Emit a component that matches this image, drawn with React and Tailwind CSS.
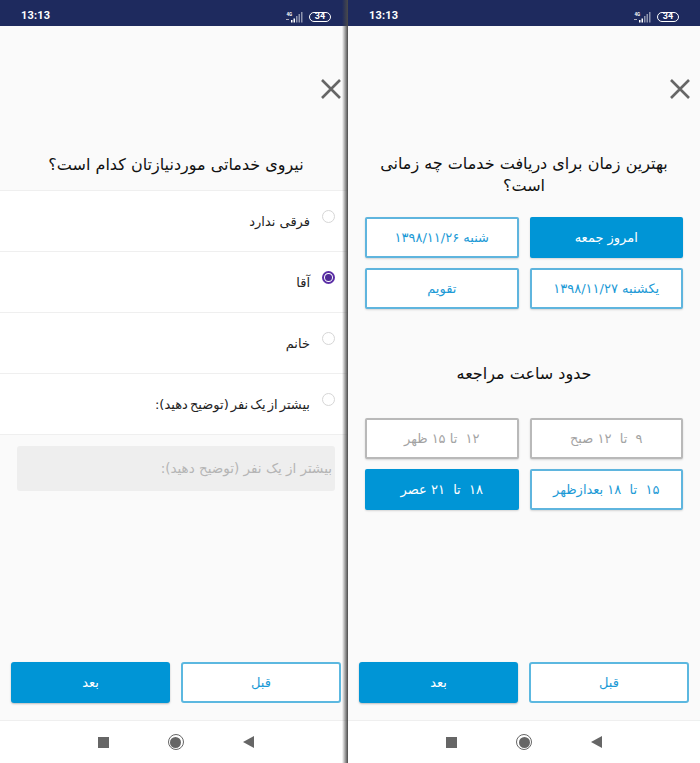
const font = { fontFamily: '"DejaVu Sans", "Noto Sans", sans-serif' };

function StatusBar({ pr }) {
  return (
    <div dir="ltr" className={`h-[26px] bg-[#1e2a5e] flex items-center justify-between pl-[21px] pt-[7px] shrink-0 ${pr}`}>
      <span className="text-white text-[11px] font-bold font-['Roboto'] tracking-[0.2px]">13:13</span>
      <div className="flex items-center gap-[6px]">
        <svg width="18" height="12" viewBox="0 0 18 12">
          <text x="1.5" y="4.5" fontSize="4.5" fontWeight="700" fill="#fff" fontFamily="Roboto">4G</text>
          <rect x="1" y="8" width="3" height="1" fill="#aab" />
          <rect x="6" y="9" width="1.5" height="2.5" fill="#fff" />
          <rect x="8.5" y="7.5" width="1.5" height="4" fill="#fff" />
          <rect x="11" y="5" width="1.5" height="6.5" fill="#8e94ae" />
          <rect x="13.5" y="3" width="1.5" height="8.5" fill="#8e94ae" />
          <rect x="16" y="1" width="1.5" height="10.5" fill="#8e94ae" />
        </svg>
        <div className="w-[22px] h-[10px] rounded-full border border-white flex items-center justify-center text-white text-[9px] font-bold font-['Roboto'] leading-none">34</div>
      </div>
    </div>
  );
}

function CloseIcon() {
  return (
    <svg width="20" height="20" viewBox="0 0 20 20" fill="none" stroke="#666" strokeWidth="2.6">
      <path d="M1 1 L19 19 M19 1 L1 19" />
    </svg>
  );
}

function NavBar({ pl }) {
  return (
    <div dir="ltr" className={`h-[43px] bg-white border-t border-[#efefef] flex items-center justify-center gap-[59px] shrink-0 ${pl}`}>
      <div className="w-[11px] h-[11px] bg-[#666]" />
      <div className="w-[16px] h-[16px] rounded-full border border-[#666] flex items-center justify-center">
        <div className="w-[11px] h-[11px] rounded-full bg-[#666]" />
      </div>
      <svg width="11" height="12" viewBox="0 0 11 12"><path d="M11 0 V12 L0 6 Z" fill="#666" /></svg>
    </div>
  );
}

function Footer({ pr }) {
  return (
    <div className={`h-[69px] flex gap-[11px] pl-[11px] pt-[11px] shrink-0 bg-[#fafafa] ${pr}`}>
      <button className="w-[160px] shrink-0 h-[41px] rounded-[3px] bg-white border-2 border-[#5cb8e0] text-[#1c9ad6] text-[13px]">قبل</button>
      <button className="w-[159px] shrink-0 h-[41px] rounded-[3px] bg-[#0095d6] text-white text-[13px] shadow-[0_1px_2px_rgba(0,0,0,0.25)]">بعد</button>
    </div>
  );
}

function Radio({ on }) {
  return on ? (
    <div className="w-[13px] h-[13px] rounded-full border-2 border-[#5b2ea6] flex items-center justify-center shrink-0">
      <div className="w-[7px] h-[7px] rounded-full bg-[#4f2a96]" />
    </div>
  ) : (
    <div className="w-[13px] h-[13px] rounded-full border border-[#d6d6d6] shrink-0" />
  );
}

function Row({ label, on, tight }) {
  return (
    <div className="h-[61px] bg-white border-b border-[#efefef] flex items-start gap-[12px] pt-[19px] pr-[13px]">
      <Radio on={on} />
      <span className={`text-[13px] leading-[20px] text-[#222] mt-[2px] ${tight ? "[word-spacing:-2px]" : ""}`}>{label}</span>
    </div>
  );
}

function Choice({ label, kind }) {
  const styles = {
    on: "bg-[#0095d6] text-white",
    off: "bg-white border-2 border-[#5fb5de] text-[#1c9ad6]",
    dis: "bg-white border-2 border-[#b9b9b9] text-[#a3a3a3]",
  };
  return (
    <div className={`h-[41px] rounded-[2px] flex items-center justify-center text-[13px] whitespace-pre shadow-[0_1px_2px_rgba(0,0,0,0.15)] ${styles[kind]}`}>
      {label}
    </div>
  );
}

function LeftPanel() {
  return (
    <div dir="rtl" className="w-[348px] h-full flex flex-col bg-[#fafafa] shrink-0">
      <StatusBar pr="pr-[17px]" />
      <div className="flex-1 flex flex-col min-h-0">
        <div className="h-[127px] flex justify-start items-start pr-[7px] pt-[53px] shrink-0"><CloseIcon /></div>
        <div className="text-center text-[16px] leading-[24px] text-[#111] pb-[13px] pl-[4px] border-b border-[#efefef]">نیروی خدماتی موردنیازتان کدام است؟</div>
        <Row label="فرقی ندارد" />
        <Row label="آقا" on />
        <Row label="خانم" />
        <Row label="بیشتر از یک نفر (توضیح دهید):" tight />
        <div className="mr-[13px] ml-[17px] mt-[11px] h-[45px] bg-[#eeeeee] rounded-[3px] flex items-center pr-[3px] text-[13.5px] text-[#b5b5b5]">بیشتر از یک نفر (توضیح دهید):</div>
      </div>
      <Footer pr="pr-[7px]" />
      <NavBar pl="pl-[3px]" />
    </div>
  );
}

function RightPanel() {
  return (
    <div dir="rtl" className="flex-1 h-full flex flex-col bg-[#fafafa] min-w-0">
      <StatusBar pr="pr-[21px]" />
      <div className="flex-1 flex flex-col min-h-0">
        <div className="h-[127px] flex justify-start items-start pr-[10px] pt-[53px] shrink-0"><CloseIcon /></div>
        <div className="text-center text-[16px] leading-[22px] text-[#111] px-[20px]">بهترین زمان برای دریافت خدمات چه زمانی است؟</div>
        <div className="grid grid-cols-2 gap-x-[11px] gap-y-[10px] px-[17px] mt-[20px]">
          <Choice label="امروز جمعه" kind="on" />
          <Choice label="شنبه ۱۳۹۸/۱۱/۲۶" kind="off" />
          <Choice label="یکشنبه ۱۳۹۸/۱۱/۲۷" kind="off" />
          <Choice label="تقویم" kind="off" />
        </div>
        <div className="text-center text-[16px] leading-[22px] text-[#111] mt-[54px]">حدود ساعت مراجعه</div>
        <div className="grid grid-cols-2 gap-x-[11px] gap-y-[10px] px-[17px] mt-[33px]">
          <Choice label="۹  تا  ۱۲ صبح" kind="dis" />
          <Choice label="۱۲  تا ۱۵ ظهر" kind="dis" />
          <Choice label="۱۵  تا  ۱۸ بعدازظهر" kind="off" />
          <Choice label="۱۸  تا  ۲۱ عصر" kind="on" />
        </div>
      </div>
      <Footer pr="pr-[11px]" />
      <NavBar pl="pl-0" />
    </div>
  );
}

export default function App() {
  return (
    <div style={font} className="relative w-[700px] h-[763px] flex overflow-hidden bg-[#fafafa]">
      <LeftPanel />
      <div className="absolute top-0 bottom-0 left-[342px] w-[6px] bg-gradient-to-r from-transparent to-[#4a4a4a] z-10" />
      <RightPanel />
    </div>
  );
}
